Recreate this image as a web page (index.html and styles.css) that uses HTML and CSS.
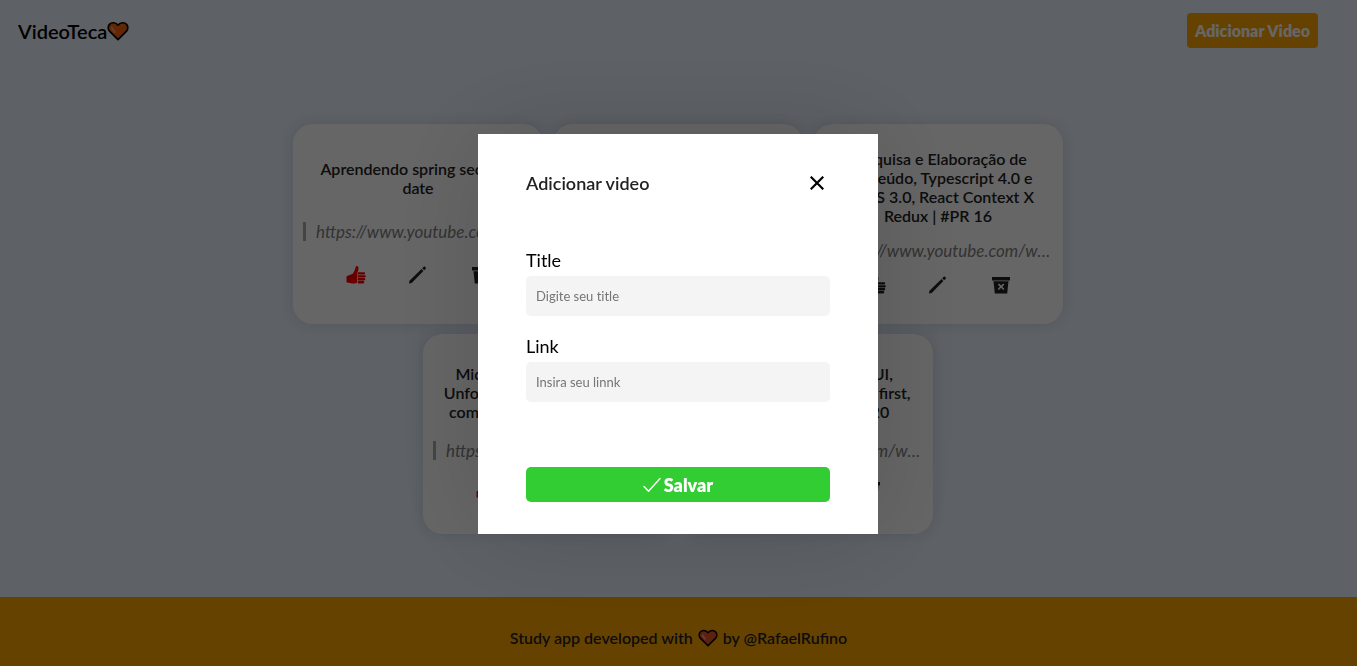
FILE: index.html
```html
<!DOCTYPE html>
<html lang="pt-BR">
<head>
  <meta charset="utf-8">
  <meta name="viewport" content="width=device-width, initial-scale=1">
  <title>VideoTeca</title>
  <link rel="stylesheet" href="styles.css">
</head>
<body>
  <svg class="sprite" aria-hidden="true">
    <symbol id="heart" viewBox="0 0 24 22">
      <path d="M12 20.5 2.6 11.1C.8 9.3.8 5.6 2.6 3.7 4.9 1.2 9 1.2 12 4.6c3-3.4 7.100-3.400 9.400-.9 1.800 1.900 1.800 5.600 0 7.400z" fill="currentColor" stroke="#000" stroke-width="1.900" stroke-linejoin="round"/>
      <path d="M5.300 7.500c.2 1.700 1.200 2.700 3.200 4.500" fill="none" stroke="#ff9a6b" stroke-width="2.200" stroke-linecap="round"/>
    </symbol>
    <symbol id="thumb" viewBox="0 0 20 20">
      <path d="M.5 11.200 6.800 8.700C8.300 6.700 9.300 4.200 9.700 1.800 10 .6 11.900.5 12.300 1.900c.5 2-.1 4-.9 5.600l-.3 10.300c-1.600.8-5.900.9-7.500.2L.5 17.300z"/>
      <path d="M11.900 7.200h6c1.600 0 1.600 2.400 0 2.400h-6zM11.900 10.200h6.800c1.500 0 1.500 2.300 0 2.300h-6.800zM11.900 13.100h6.200c1.500 0 1.500 2.300 0 2.300h-6.200zM11.900 16h5.200c1.500 0 1.500 2.400 0 2.400h-5.200z"/>
    </symbol>
    <symbol id="pencil" viewBox="0 0 20 20">
      <path d="M1 18.400 1.500 15.700 13.500 4 15.400 5.900 3.700 17.900z"/>
      <path d="m14.200 3.300 1.300-1.300c.6-.6 1.200-.6 1.700-.1l.4.400c.5.500.5 1.100-.1 1.700l-1.300 1.300z"/>
    </symbol>
    <symbol id="bin" viewBox="0 0 20 20">
      <path fill-rule="evenodd" d="M1 2h18v3.400H1zM2.500 6.300h15L16.200 18.500H3.800zM7.900 8.400 6.800 9.500l2.100 2.200-2.100 2.200L7.900 15l2.200-2.200 2.200 2.200 1.100-1.100-2.100-2.200 2.100-2.200-1.100-1.100-2.200 2.200z"/>
    </symbol>
  </svg>

  <div class="page">
    <header class="topbar">
      <h1 class="brand">VideoTeca<svg class="brand-heart" aria-hidden="true"><use href="#heart"/></svg></h1>
      <button class="add-button" type="button">Adicionar Video</button>
    </header>

    <main class="videos">
      <article class="card">
        <h2 class="card-title">Aprendendo spring security<br>date</h2>
        <a class="card-link" href="#">https://www.youtube.com/watch?v=spring</a>
        <div class="card-actions">
          <button class="icon-button liked" type="button" aria-label="Curtir"><svg><use href="#thumb"/></svg></button>
          <button class="icon-button" type="button" aria-label="Editar"><svg><use href="#pencil"/></svg></button>
          <button class="icon-button" type="button" aria-label="Excluir"><svg><use href="#bin"/></svg></button>
        </div>
      </article>
      <article class="card">
        <h2 class="card-title">Aprendendo React</h2>
        <a class="card-link" href="#">https://www.youtube.com/watch?v=react</a>
        <div class="card-actions">
          <button class="icon-button" type="button" aria-label="Curtir"><svg><use href="#thumb"/></svg></button>
          <button class="icon-button" type="button" aria-label="Editar"><svg><use href="#pencil"/></svg></button>
          <button class="icon-button" type="button" aria-label="Excluir"><svg><use href="#bin"/></svg></button>
        </div>
      </article>
      <article class="card">
        <h2 class="card-title">Pesquisa e Elaboração de<br>Conteúdo, Typescript 4.0 e<br>VueJS 3.0, React Context X<br>Redux | #PR 16</h2>
        <a class="card-link" href="#">https://www.youtube.com/watch?v=pr16</a>
        <div class="card-actions">
          <button class="icon-button" type="button" aria-label="Curtir"><svg><use href="#thumb"/></svg></button>
          <button class="icon-button" type="button" aria-label="Editar"><svg><use href="#pencil"/></svg></button>
          <button class="icon-button" type="button" aria-label="Excluir"><svg><use href="#bin"/></svg></button>
        </div>
      </article>
      <article class="card">
        <h2 class="card-title">Microfrontends, Hooks ou<br>Unform, formulários no React<br>com validação Yup! | #PR 18</h2>
        <a class="card-link" href="#">https://www.youtube.com/watch?v=pr18</a>
        <div class="card-actions">
          <button class="icon-button liked" type="button" aria-label="Curtir"><svg><use href="#thumb"/></svg></button>
          <button class="icon-button" type="button" aria-label="Editar"><svg><use href="#pencil"/></svg></button>
          <button class="icon-button" type="button" aria-label="Excluir"><svg><use href="#bin"/></svg></button>
        </div>
      </article>
      <article class="card">
        <h2 class="card-title">Design System, Ionic UI,<br>React Native em Mobile first,<br>Componentes | #PR 20</h2>
        <a class="card-link" href="#">https://www.youtube.com/watch?v=pr20</a>
        <div class="card-actions">
          <button class="icon-button" type="button" aria-label="Curtir"><svg><use href="#thumb"/></svg></button>
          <button class="icon-button" type="button" aria-label="Editar"><svg><use href="#pencil"/></svg></button>
          <button class="icon-button" type="button" aria-label="Excluir"><svg><use href="#bin"/></svg></button>
        </div>
      </article>
    </main>

    <footer class="footer">
      <span>Study app developed with</span>
      <svg class="footer-heart" role="img" aria-label="amor"><use href="#heart"/></svg>
      <span>by @RafaelRufino</span>
    </footer>
  </div>

  <div class="overlay">
    <form class="modal" role="dialog" aria-modal="true" aria-labelledby="modal-title">
      <div class="modal-header">
        <h2 class="modal-title" id="modal-title">Adicionar video</h2>
        <button class="close-button" type="button" aria-label="Fechar">
          <svg viewBox="0 0 14 14"><path d="m1.500 1.500 11 11m0-11-11 11" fill="none" stroke="#000" stroke-width="2.200" stroke-linecap="square"/></svg>
        </button>
      </div>
      <div class="field">
        <label for="title">Title</label>
        <input id="title" type="text" placeholder="Digite seu title">
      </div>
      <div class="field">
        <label for="link">Link</label>
        <input id="link" type="text" placeholder="Insira seu linnk">
      </div>
      <button class="save-button" type="submit">
        <svg viewBox="0 0 18 16" aria-hidden="true"><path d="m1 9.500 4.500 4.700L17 1.500" fill="none" stroke="#fff" stroke-width="1.400" stroke-linecap="round" stroke-linejoin="round"/></svg>
        Salvar
      </button>
    </form>
  </div>
</body>
</html>
```

FILE: styles.css
```css
* {
  margin: 0;
  padding: 0;
  box-sizing: border-box;
}

body,
button,
input {
  font-family: Lato, "Open Sans", sans-serif;
}

body {
  background: #ebf4ff;
  color: #000;
}

button {
  border: 0;
  cursor: pointer;
}

.sprite {
  display: none;
}

.page {
  display: flex;
  flex-direction: column;
  min-height: 100vh;
}

.topbar {
  display: flex;
  align-items: center;
  justify-content: space-between;
  padding: 13px 39px 13px 18px;
}

.brand {
  display: flex;
  align-items: center;
  font-size: 20px;
  font-weight: 600;
}

.brand-heart {
  width: 22px;
  height: 20px;
  color: #f7630c;
}

.add-button {
  height: 35px;
  padding: 0 8px;
  border-radius: 4px;
  background: orange;
  color: #fff;
  font-size: 16px;
  font-weight: 800;
}

.videos {
  flex: 1;
  display: flex;
  flex-wrap: wrap;
  align-content: center;
  justify-content: center;
  gap: 10px;
  max-width: 801px;
  margin: 0 auto;
  padding-right: 1px;
}

.card {
  display: flex;
  flex-direction: column;
  justify-content: space-evenly;
  width: 250px;
  height: 200px;
  padding: 10px 10px 14px;
  border-radius: 20px;
  background: #fff;
  box-shadow: 0 0 16px rgba(0, 60, 90, 0.14);
}

.card-title {
  font-size: 16px;
  font-weight: 600;
  line-height: 19px;
  text-align: center;
  color: #222;
}

.card-link {
  overflow: hidden;
  padding-left: 10px;
  border-left: 3px solid #aaa;
  color: #808080;
  font-size: 17px;
  font-style: italic;
  line-height: 19px;
  text-decoration: none;
  text-overflow: ellipsis;
  white-space: nowrap;
}

.card-actions {
  display: flex;
  justify-content: space-evenly;
}

.icon-button {
  width: 20px;
  height: 20px;
  background: none;
  color: #222;
}

.icon-button svg {
  display: block;
  width: 20px;
  height: 20px;
  fill: currentColor;
}

.icon-button.liked {
  color: red;
}

.footer {
  display: flex;
  align-items: center;
  justify-content: center;
  gap: 5px;
  padding: 31px 0 19px;
  background: orange;
  color: #222;
  font-size: 16px;
  font-weight: 600;
  line-height: 19px;
}

.footer-heart {
  width: 20px;
  height: 18px;
  color: #e8532a;
}

.overlay {
  position: fixed;
  inset: 0;
  display: flex;
  align-items: center;
  justify-content: center;
  padding: 2px 1px 0 0;
  background: rgba(0, 0, 0, 0.6);
}

.modal {
  display: flex;
  flex-direction: column;
  width: 400px;
  padding: 32px 48px;
  background: #fff;
  box-shadow: 0 0 100px rgba(0, 0, 0, 0.15);
}

.modal-header {
  display: flex;
  align-items: center;
  justify-content: space-between;
  height: 34px;
  margin-bottom: 49px;
}

.modal-title {
  color: #222;
  font-size: 18px;
  font-weight: 600;
}

.close-button {
  display: grid;
  place-items: center;
  width: 26px;
  height: 26px;
  background: none;
}

.close-button svg {
  width: 14px;
  height: 14px;
}

.field {
  display: flex;
  flex-direction: column;
  gap: 5px;
  margin-bottom: 19px;
}

.field label {
  font-size: 18px;
  line-height: 22px;
}

.field input {
  height: 40px;
  padding: 0 10px;
  border: 0;
  border-radius: 5px;
  background: #f4f4f4;
  font-size: 13px;
  font-variant-ligatures: none;
}

.field input::placeholder {
  color: #757575;
}

.save-button {
  display: flex;
  align-items: center;
  justify-content: center;
  gap: 3px;
  height: 35px;
  margin-top: 46px;
  border-radius: 5px;
  background: limegreen;
  color: #fff;
  font-size: 18px;
  font-weight: 800;
}

.save-button svg {
  width: 18px;
  height: 16px;
}
```
